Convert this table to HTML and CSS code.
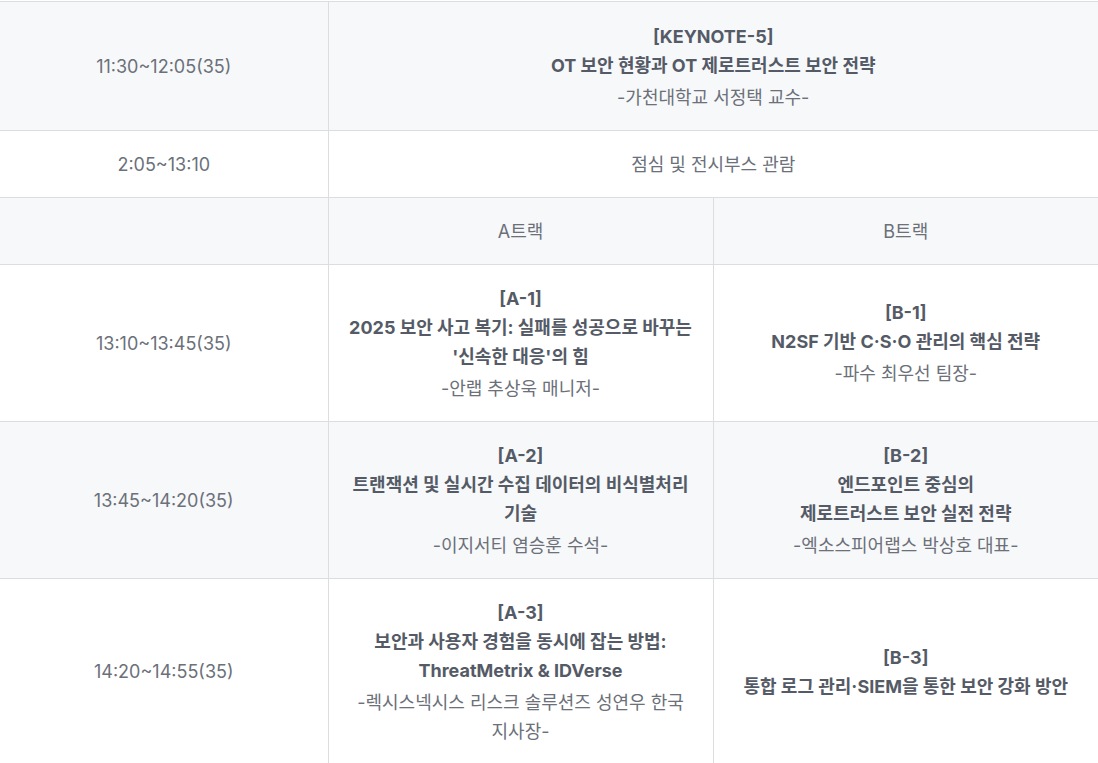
FILE: index.html
```html
<!DOCTYPE html>
<html lang="ko">
<head>
<meta charset="utf-8">
<title>Program</title>
<link rel="stylesheet" href="styles.css">
</head>
<body>
<table class="schedule">
  <colgroup>
    <col class="col-time">
    <col class="col-track">
    <col class="col-track">
  </colgroup>
  <tbody>
    <tr class="row-grey">
      <td class="time">11:30~12:05(35)</td>
      <td colspan="2" class="session">
        <strong>[KEYNOTE-5]<br>OT 보안 현황과 OT 제로트러스트 보안 전략</strong>
        <p class="speaker">-가천대학교 서정택 교수-</p>
      </td>
    </tr>
    <tr>
      <td class="time">2:05~13:10</td>
      <td colspan="2" class="plain">점심 및 전시부스 관람</td>
    </tr>
    <tr class="row-grey">
      <td class="time"></td>
      <td class="plain">A트랙</td>
      <td class="plain">B트랙</td>
    </tr>
    <tr>
      <td class="time">13:10~13:45(35)</td>
      <td class="session">
        <strong>[A-1]<br>2025 보안 사고 복기: 실패를 성공으로 바꾸는 '신속한 대응'의 힘</strong>
        <p class="speaker">-안랩 추상욱 매니저-</p>
      </td>
      <td class="session">
        <strong>[B-1]<br>N2SF 기반 C·S·O 관리의 핵심 전략</strong>
        <p class="speaker">-파수 최우선 팀장-</p>
      </td>
    </tr>
    <tr class="row-grey">
      <td class="time">13:45~14:20(35)</td>
      <td class="session">
        <strong>[A-2]<br>트랜잭션 및 실시간 수집 데이터의 비식별처리 기술</strong>
        <p class="speaker">-이지서티 염승훈 수석-</p>
      </td>
      <td class="session">
        <strong>[B-2]<br>엔드포인트 중심의<br>제로트러스트 보안 실전 전략</strong>
        <p class="speaker">-엑소스피어랩스 박상호 대표-</p>
      </td>
    </tr>
    <tr>
      <td class="time">14:20~14:55(35)</td>
      <td class="session">
        <strong>[A-3]<br>보안과 사용자 경험을 동시에 잡는 방법: ThreatMetrix &amp; IDVerse</strong>
        <p class="speaker">-렉시스넥시스 리스크 솔루션즈 성연우 한국 지사장-</p>
      </td>
      <td class="session">
        <strong>[B-3]<br>통합 로그 관리·SIEM을 통한 보안 강화 방안</strong>
      </td>
    </tr>
  </tbody>
</table>
</body>
</html>
```

FILE: styles.css
```css
html, body {
  margin: 0;
  padding: 0;
  background: #ffffff;
}

body {
  padding-top: 1px;
  font-family: "Inter", "Noto Sans CJK KR", sans-serif;
  font-size: 18px;
  color: #6b7079;
}

.schedule {
  width: 100%;
  border-collapse: collapse;
  table-layout: fixed;
}

.col-time {
  width: 328px;
}

.col-track {
  width: auto;
}

.schedule td {
  border: 1px solid #dcdde0;
  padding: 18.5px 20px;
  text-align: center;
  vertical-align: middle;
  line-height: 29px;
  word-break: keep-all;
}

.schedule tr:first-child td {
  padding-top: 19.5px;
}

.schedule tr td:first-child {
  border-left: none;
}

.schedule tr td:last-child {
  border-right: none;
}

.row-grey td {
  background: #f7f8fa;
}

.time {
  color: #6b7079;
}

.plain {
  color: #6b7079;
}

.session strong {
  display: block;
  font-weight: 700;
  color: #555b66;
}

.speaker {
  margin: 3px 0 0;
  color: #6b7079;
}
```
